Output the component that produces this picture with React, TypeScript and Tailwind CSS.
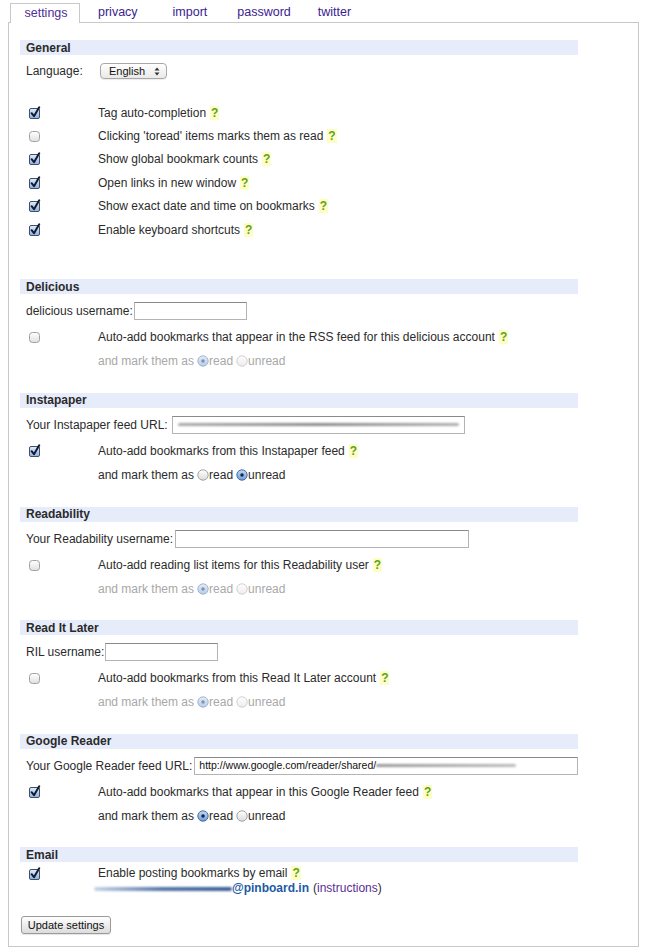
import React from "react";

const font = { fontFamily: '"Liberation Sans", Arial, Helvetica, sans-serif' };

function Checkbox({ checked }: { checked: boolean }) {
  return (
    <svg width="13" height="14" viewBox="0 0 13 14" className="block">
      <defs>
        <linearGradient id="cbc" x1="0" y1="0" x2="0" y2="1">
          <stop offset="0" stopColor="#e2edf9" />
          <stop offset="1" stopColor="#8db1e0" />
        </linearGradient>
        <linearGradient id="cbu" x1="0" y1="0" x2="0" y2="1">
          <stop offset="0" stopColor="#ffffff" />
          <stop offset="1" stopColor="#e0e0e0" />
        </linearGradient>
      </defs>
      <rect
        x="1.5"
        y="2.5"
        width="10"
        height="10"
        rx={checked ? 1.5 : 3}
        fill={checked ? "url(#cbc)" : "url(#cbu)"}
        stroke={checked ? "#3f4f6c" : "#a0a0a0"}
      />
      {checked && (
        <path
          d="M3.6 7.2 L6 10.2 L11.2 1.3"
          stroke="#111c33"
          strokeWidth="2"
          fill="none"
          strokeLinecap="round"
          strokeLinejoin="round"
        />
      )}
    </svg>
  );
}

function Radio({ selected, disabled }: { selected: boolean; disabled?: boolean }) {
  return (
    <svg
      width="12"
      height="12"
      viewBox="0 0 12 12"
      className={"inline-block align-[-2px] " + (disabled ? "opacity-50" : "")}
    >
      <defs>
        <linearGradient id="rds" x1="0" y1="0" x2="0" y2="1">
          <stop offset="0" stopColor="#c4daf5" />
          <stop offset="1" stopColor="#6a9edf" />
        </linearGradient>
        <linearGradient id="rdu" x1="0" y1="0" x2="0" y2="1">
          <stop offset="0" stopColor="#ffffff" />
          <stop offset="1" stopColor="#dcdcdc" />
        </linearGradient>
      </defs>
      <circle
        cx="6"
        cy="6"
        r="5.2"
        fill={selected ? "url(#rds)" : "url(#rdu)"}
        stroke={selected ? "#41618f" : "#9a9a9a"}
        strokeWidth="0.9"
      />
      {selected && <circle cx="6" cy="6" r="1.7" fill="#16233f" />}
    </svg>
  );
}

function Help() {
  return (
    <span className="ml-[4px] bg-[#fdfdc4] px-[1px] font-bold text-[#5ea21e]">?</span>
  );
}

function Header({ children }: { children: React.ReactNode }) {
  return (
    <div className="flex h-[15px] items-center bg-[#e7ecfa] pl-[6px] text-[12px] font-bold leading-none text-[#2a2a2a]">
      {children}
    </div>
  );
}

function CheckRow({
  checked,
  children,
  h = "h-[23.4px]",
}: {
  checked: boolean;
  children: React.ReactNode;
  h?: string;
}) {
  return (
    <div className={"flex items-center pl-[6px] " + h}>
      <div className="w-[72px] shrink-0 pl-[2px]">
        <Checkbox checked={checked} />
      </div>
      <div className="whitespace-nowrap">{children}</div>
    </div>
  );
}

function RadioRow({ read, disabled }: { read: boolean; disabled?: boolean }) {
  return (
    <div
      className={
        "flex h-[24px] items-center whitespace-nowrap pl-[78px] " +
        (disabled ? "text-[#a8a8a8]" : "")
      }
    >
      <span>and mark them as</span>
      <span className="ml-[3px]">
        <Radio selected={read} disabled={disabled} />
      </span>
      <span>read</span>
      <span className="ml-[3px]">
        <Radio selected={!read} disabled={disabled} />
      </span>
      <span>unread</span>
    </div>
  );
}

function TextInput({ w, children }: { w: string; children?: React.ReactNode }) {
  return (
    <div
      className={
        "flex h-[18px] shrink-0 items-center overflow-hidden border border-[#b4b4b4] border-t-[#8a8a8a] bg-white " +
        w
      }
    >
      {children}
    </div>
  );
}

function Blur({ w, color = "bg-[#9a9a9a]" }: { w: string; color?: string }) {
  return <div className={"h-[3px] shrink-0 rounded-full blur-[1.2px] " + color + " " + w} />;
}

function Section({
  title,
  label,
  input,
  checked,
  text,
  read,
  disabled,
}: {
  title: string;
  label: string;
  input: React.ReactNode;
  checked: boolean;
  text: string;
  read: boolean;
  disabled?: boolean;
}) {
  return (
    <div className="mb-[19.6px]">
      <Header>{title}</Header>
      <div className="mt-[4px] flex h-[26px] items-center whitespace-nowrap pl-[6px]">
        <span className="mr-[1px] shrink-0">{label}</span>
        {input}
      </div>
      <div className="mt-px">
        <CheckRow checked={checked} h="h-[24px]">
          {text}
          <Help />
        </CheckRow>
      </div>
      <RadioRow read={read} disabled={disabled} />
    </div>
  );
}

export default function App() {
  return (
    <div
      className="relative h-[952px] w-[650px] bg-white text-[12px] text-[#2b2b2b]"
      style={font}
    >
      {/* tabs */}
      <div className="flex h-[22px] items-end pl-[10px] pt-[2px] text-[12.5px]">
        <div className="relative z-10 -mb-px flex h-[20px] w-[70px] items-center justify-center border border-b-0 border-[#c8c8c8] bg-white pl-[2px] text-[#4f2f96]">
          settings
        </div>
        <div className="flex h-[20px] items-center text-[#3b2290]">
          <span className="ml-[18px]">privacy</span>
          <span className="ml-[35px]">import</span>
          <span className="ml-[30px]">password</span>
          <span className="ml-[27px]">twitter</span>
        </div>
      </div>

      {/* panel */}
      <div className="mx-[8px] w-[631px] border border-[#c8c8c8] pb-[12px] pl-[11px] pt-[17px]">
        <div className="w-[558px]">
          <Header>General</Header>
          <div className="mt-[3px] flex h-[26px] items-center pl-[6px]">
            <span className="w-[74px]">Language:</span>
            <div className="flex h-[16px] w-[67px] items-center justify-between rounded-[4px] border border-[#a8a8a8] bg-gradient-to-b from-white to-[#e9e9e9] pl-[8px] pr-[6px] text-[11px] text-[#111] shadow-[0_1px_1px_rgba(0,0,0,0.08)]">
              <span>English</span>
              <svg width="6" height="9" viewBox="0 0 6 9">
                <path d="M3 0.5 L5.5 3.5 H0.5 Z" fill="#333" />
                <path d="M3 8.5 L5.5 5.5 H0.5 Z" fill="#333" />
              </svg>
            </div>
          </div>

          <div className="mt-[17px]">
            <CheckRow checked>
              Tag auto-completion
              <Help />
            </CheckRow>
            <CheckRow checked={false}>
              Clicking 'toread' items marks them as read
              <Help />
            </CheckRow>
            <CheckRow checked>
              Show global bookmark counts
              <Help />
            </CheckRow>
            <CheckRow checked>
              Open links in new window
              <Help />
            </CheckRow>
            <CheckRow checked>
              Show exact date and time on bookmarks
              <Help />
            </CheckRow>
            <CheckRow checked>
              Enable keyboard shortcuts
              <Help />
            </CheckRow>
          </div>

          <div className="mt-[38px]">
            <Section
              title="Delicious"
              label="delicious username:"
              input={<TextInput w="w-[113px]" />}
              checked={false}
              text="Auto-add bookmarks that appear in the RSS feed for this delicious account"
              read
              disabled
            />
            <Section
              title="Instapaper"
              label="Your Instapaper feed URL: "
              input={
                <div className="ml-[3px]">
                  <TextInput w="w-[293px]">
                    <div className="flex w-full justify-center px-[5px]">
                      <Blur w="w-full" color="bg-gradient-to-r from-[#aaa] via-[#8a8a8a] to-[#b0b0b0]" />
                    </div>
                  </TextInput>
                </div>
              }
              checked
              text="Auto-add bookmarks from this Instapaper feed"
              read={false}
            />
            <Section
              title="Readability"
              label="Your Readability username: "
              input={
                <div className="ml-[1px]">
                  <TextInput w="w-[294px]" />
                </div>
              }
              checked={false}
              text="Auto-add reading list items for this Readability user"
              read
              disabled
            />
            <Section
              title="Read It Later"
              label="RIL username:"
              input={<TextInput w="w-[113px]" />}
              checked={false}
              text="Auto-add bookmarks from this Read It Later account"
              read
              disabled
            />
            <Section
              title="Google Reader"
              label="Your Google Reader feed URL: "
              input={
                <div className="ml-[1px]">
                  <TextInput w="w-[384px]">
                    <span className="shrink-0 pl-[4px] text-[10.5px] text-[#111]">
                      http://www.google.com/reader/shared/
                    </span>
                    <Blur w="w-[140px]" color="bg-gradient-to-r from-[#999] via-[#aaa] to-[#bbb]" />
                  </TextInput>
                </div>
              }
              checked
              text="Auto-add bookmarks that appear in this Google Reader feed"
              read
            />
          </div>

          <Header>Email</Header>
          <div className="mt-[4px] flex pl-[6px] leading-[15px]">
            <div className="w-[72px] shrink-0 pl-[2px] pt-[1px]">
              <Checkbox checked />
            </div>
            <div className="whitespace-nowrap">
              <div>
                Enable posting bookmarks by email
                <Help />
              </div>
              <div className="-ml-[4px] flex items-center">
                <Blur w="w-[138px]" color="bg-gradient-to-r from-[#c8d4e6] via-[#5576a8] to-[#3b5f98] h-[4px]" />
                <span className="font-bold text-[#1c5aa6]">@pinboard.in</span>
                <span className="ml-[4px]">
                  (<span className="text-[#5a2b96]">instructions</span>)
                </span>
              </div>
            </div>
          </div>

          <div className="mt-[19.5px] pl-[1px]">
            <div className="flex h-[18px] w-[90px] items-center justify-center rounded-[3px] border border-[#9a9a9a] bg-gradient-to-b from-white to-[#dcdcdc] text-[11px] text-[#111] shadow-[0_1px_1px_rgba(0,0,0,0.1)]">
              Update settings
            </div>
          </div>
        </div>
      </div>
    </div>
  );
}
